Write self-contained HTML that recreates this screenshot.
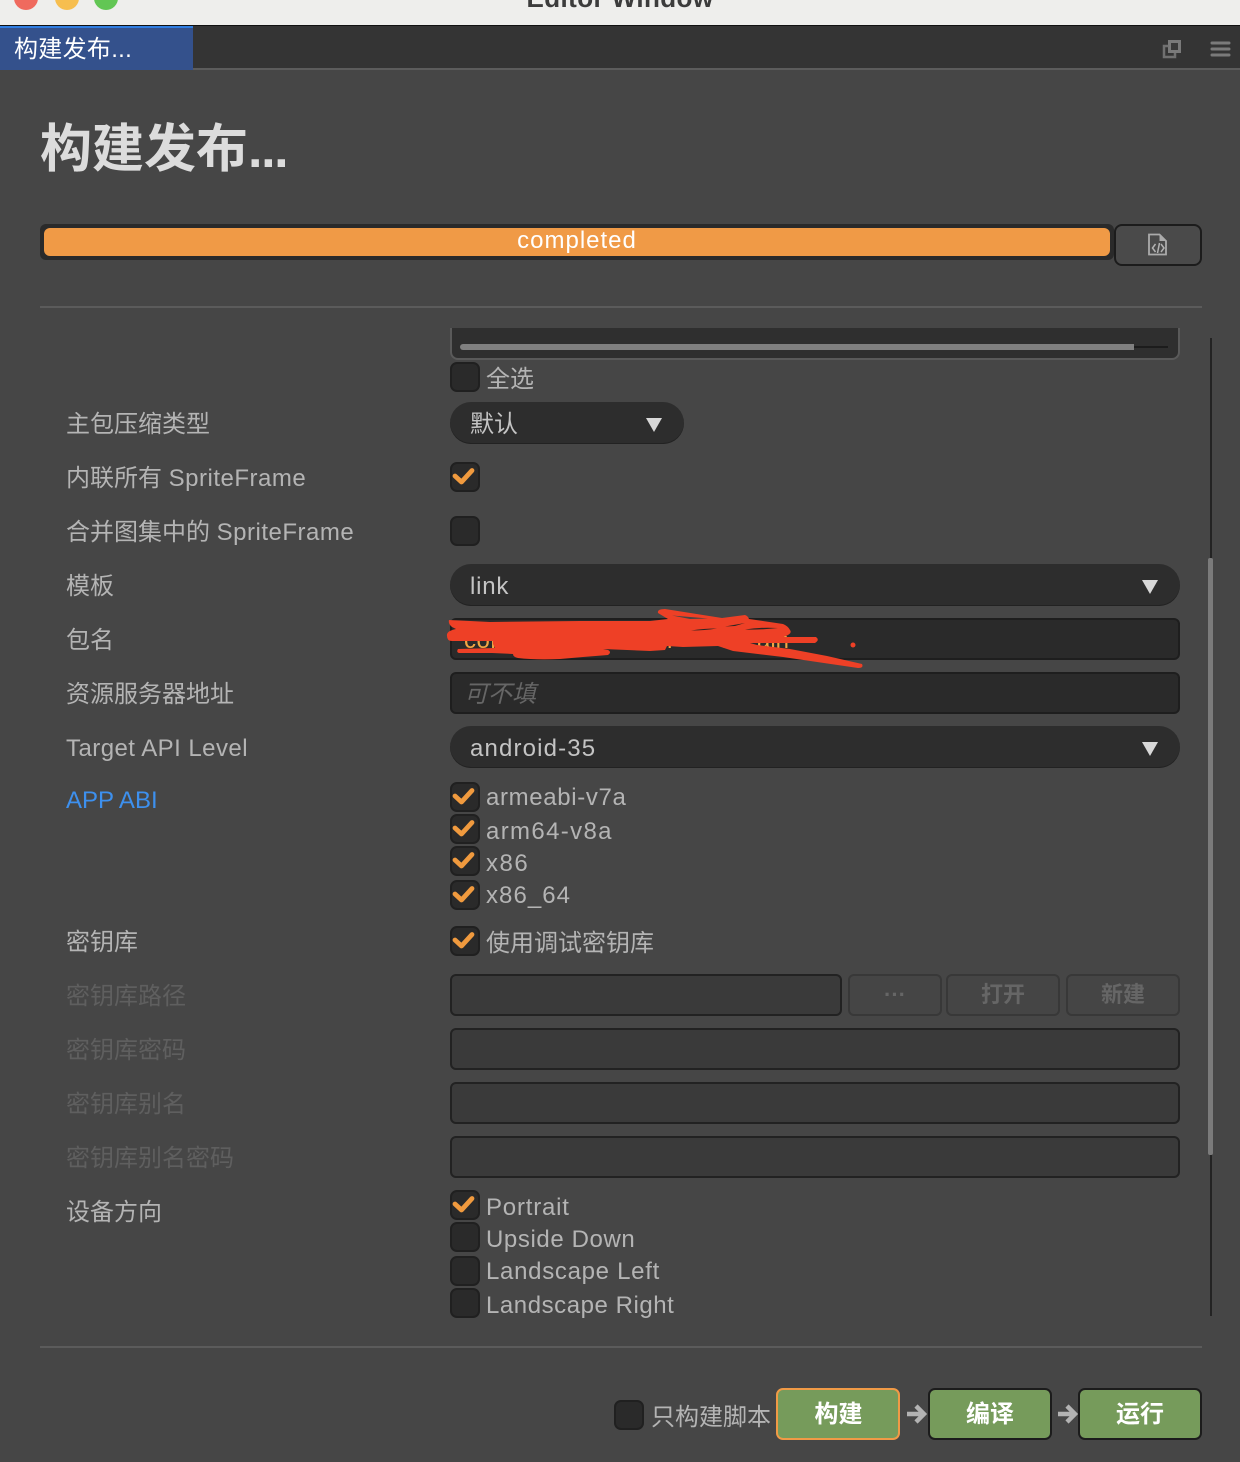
<!DOCTYPE html>
<html lang="zh">
<head>
<meta charset="utf-8">
<title>Editor Window</title>
<style>
html,body{margin:0;padding:0;background:#464646;}
body{position:relative;width:1240px;height:1462px;overflow:hidden;font-family:"Liberation Sans","Noto Sans CJK SC",sans-serif;font-size:24px;color:#b4b4b4;}
.a{position:absolute;box-sizing:border-box;}
.t{position:absolute;height:40px;line-height:40px;white-space:nowrap;}
.l{letter-spacing:.5px;}
.lab{left:66px;}
.dis{color:#5f5f5f;}
.opt{left:486px;}
.cb{position:absolute;left:450px;width:30px;height:30px;box-sizing:border-box;background:#2a2a2a;border:2px solid #202020;border-radius:7px;}
.cb svg{position:absolute;left:-2px;top:-2px;width:30px;height:30px;}
.sel{position:absolute;left:450px;width:730px;height:42px;background:#2d2d2d;border-radius:21px;box-shadow:inset 0 -1px 0 #222;}
.sel span{position:absolute;left:20px;top:3px;line-height:40px;color:#c4c4c4;}
.sel i{position:absolute;right:22px;top:16px;width:0;height:0;border-left:8px solid transparent;border-right:8px solid transparent;border-top:14px solid #d8d8d8;}
.inp{position:absolute;left:450px;width:730px;height:42px;box-sizing:border-box;border-radius:6px;border:2px solid #1e1e1e;}
.dark{background:#2a2a2a;}
.mid{background:#3a3a3a;border-color:#222;}
.dbtn{position:absolute;top:974px;height:42px;box-sizing:border-box;border:2px solid #383838;border-radius:6px;background:#454545;color:#666;font-weight:bold;font-size:22px;text-align:center;line-height:38px;}
.gbtn{position:absolute;top:1388px;height:52px;width:124px;box-sizing:border-box;border:2px solid #1c1c1c;border-radius:7px;background:#769b5b;color:#fff;font-weight:bold;text-align:center;line-height:49px;}
.hr{position:absolute;left:40px;width:1162px;height:2px;background:#5b5b5b;}
</style>
</head>
<body>
<!-- title bar -->
<div class="a" style="left:0;top:0;width:1240px;height:26px;background:#eeeeec;border-bottom:1px solid #111;overflow:hidden;">
  <div class="a" style="left:14px;top:-14px;width:24px;height:24px;border-radius:50%;background:#ef6a5e;"></div>
  <div class="a" style="left:55px;top:-14px;width:24px;height:24px;border-radius:50%;background:#f6be4f;"></div>
  <div class="a" style="left:94px;top:-14px;width:24px;height:24px;border-radius:50%;background:#62c654;"></div>
  <div class="a" style="left:0;top:-17px;width:1240px;text-align:center;font-weight:bold;font-size:26px;line-height:30px;color:#3c3c3c;letter-spacing:.4px;">Editor Window</div>
</div>
<!-- tab bar -->
<div class="a" style="left:0;top:26px;width:1240px;height:44px;background:#343434;border-bottom:2px solid #5c5c5c;"></div>
<div class="a" style="left:0;top:26px;width:193px;height:44px;background:#34518c;border-top:2px solid #2f7de1;"></div>
<div class="t" style="left:14px;top:30px;color:#fff;letter-spacing:.3px;">构建发布...</div>
<svg class="a" style="left:1160px;top:38px;" width="72" height="22" viewBox="0 0 72 22">
  <path d="M9.500 3.500h10v10h-10z" fill="#3a3a3a" stroke="#7a7a7a" stroke-width="3"/>
  <path d="M8.500 8h-4.500v11h11v-4" fill="none" stroke="#707070" stroke-width="2.500"/>
  <path d="M52 5h17M52 11h17M52 17h17" fill="none" stroke="#7a7a7a" stroke-width="3" stroke-linecap="round"/>
</svg>
<!-- heading -->
<div class="a" style="left:40px;top:115px;height:70px;line-height:70px;font-size:52px;font-weight:bold;color:#dcdcdc;white-space:nowrap;">构建发布<span style="letter-spacing:-1.400px;">...</span></div>
<!-- progress -->
<div class="a" style="left:40px;top:224px;width:1074px;height:36px;background:#2a2a2a;border-radius:6px;"></div>
<div class="a" style="left:44px;top:228px;width:1066px;height:28px;background:#f09a46;border-radius:6px;"></div>
<div class="t" style="left:40px;top:221px;width:1074px;text-align:center;color:#fff;letter-spacing:1px;">completed</div>
<div class="a" style="left:1114px;top:224px;width:88px;height:42px;background:#4a4a4a;border:2px solid #1c1c1c;border-radius:8px;"></div>
<svg class="a" style="left:1147px;top:233px;" width="22" height="24" viewBox="0 0 22 24">
  <path d="M2 1.500h10.500l6.500 6.500v13.500h-17z" fill="none" stroke="#ababab" stroke-width="1.800"/>
  <path d="M12.500 1.500v6.500h6.500z" fill="#ababab"/>
  <path d="M8.500 11l-3 4 3 4M14 11l3 4-3 4M12.500 10l-2 10" fill="none" stroke="#b3b3b3" stroke-width="1.500"/>
</svg>
<div class="hr" style="top:306px;"></div>
<!-- scrollbar -->
<div class="a" style="left:1210px;top:338px;width:2px;height:978px;background:#232323;"></div>
<div class="a" style="left:1208px;top:558px;width:5px;height:597px;background:#7b7b7b;border-radius:2px;"></div>
<!-- scroll box -->
<div class="a" style="left:450px;top:328px;width:730px;height:32px;background:#2f2f2f;border:2px solid #5a5a5a;border-top:0;border-radius:0 0 8px 8px;"></div>
<div class="a" style="left:460px;top:344px;width:674px;height:6px;background:#808080;border-radius:3px 0 0 3px;"></div>
<div class="a" style="left:1134px;top:346px;width:34px;height:2px;background:#1c1c1c;"></div>

<div class="cb" style="top:362px;"></div>
<div class="t opt" style="top:360px;">全选</div>

<div class="t lab" style="top:405px;">主包压缩类型</div>
<div class="sel" style="top:402px;width:234px;"><span>默认</span><i></i></div>

<div class="t lab" style="top:459px;">内联所有 <span class="l">SpriteFrame</span></div>
<div class="cb" style="top:462px;"><svg viewBox="0 0 30 30"><path d="M5 14l6.500 6L22 8.500" fill="none" stroke="#f09a3e" stroke-width="4.800" stroke-linecap="round" stroke-linejoin="round"/></svg></div>

<div class="t lab" style="top:513px;">合并图集中的 <span class="l">SpriteFrame</span></div>
<div class="cb" style="top:516px;"></div>

<div class="t lab" style="top:567px;">模板</div>
<div class="sel" style="top:564px;"><span style="letter-spacing:.8px;">link</span><i></i></div>

<div class="t lab" style="top:621px;">包名</div>
<div class="inp dark" style="top:618px;"></div>
<div class="t" style="left:464px;top:621px;color:#f2a643;letter-spacing:.5px;">com</div>
<div class="t" style="left:667px;top:621px;color:#f2a643;">r</div>
<div class="t" style="left:722px;top:621px;color:#f2a643;letter-spacing:2px;">is</div>
<div class="t" style="left:757px;top:621px;color:#f2a643;">ain</div>
<svg class="a" style="left:440px;top:600px;" width="440" height="80" viewBox="440 600 440 80">
  <path d="M449 620 Q448 624 452 627 L456 629 Q446 631 447 636 Q447 641 452 641 L493 641 L493 644 L495 648 L458 649 Q456 652 459 653 L492 653 L513 654 Q513 657 518 658 Q535 660 560 659 L583 657 L608 655 Q612 652 608 650 L603 649 L650 651 L665 650 L667 646 L683 647 L718 646 L733 651 L783 657 L858 668 Q864 668 862 664 L827 656 L790 649 L757 645 L750 643 L815 643 Q820 640 816 637 L783 637 Q793 634 790 630 Q788 626 783 624 L749 619 Q748 616 745 615 L722 618 L665 609 Q657 609 658 613 L668 619 L650 621 L580 621 L490 622 L470 621Z" fill="#ee4026"/>
  <path d="M672 615.500 L708 618.500 L690 619Z" fill="#464646"/>
  <path d="M691 630.500 Q703 628.500 717 628.500 Q705 630.500 691 630.500ZM725 626.500 L745 623 L735 626ZM745 629.500 Q760 627 778 628 Q760 630 745 629.500Z" fill="#2c2522"/>
  <circle cx="853" cy="645" r="2.500" fill="#ee4026"/>
</svg>

<div class="t lab" style="top:675px;">资源服务器地址</div>
<div class="inp dark" style="top:672px;"></div>
<div class="t" style="left:464px;top:675px;color:#666;font-style:italic;">可不填</div>

<div class="t lab" style="top:729px;letter-spacing:.45px;">Target API Level</div>
<div class="sel" style="top:726px;"><span style="letter-spacing:1.15px;">android-35</span><i></i></div>

<div class="t lab" style="top:781px;color:#3d90ee;">APP ABI</div>
<div class="cb" style="top:782px;"><svg viewBox="0 0 30 30"><path d="M5 14l6.500 6L22 8.500" fill="none" stroke="#f09a3e" stroke-width="4.800" stroke-linecap="round" stroke-linejoin="round"/></svg></div>
<div class="t opt" style="top:778px;letter-spacing:.65px;">armeabi-v7a</div>
<div class="cb" style="top:814px;"><svg viewBox="0 0 30 30"><path d="M5 14l6.500 6L22 8.500" fill="none" stroke="#f09a3e" stroke-width="4.800" stroke-linecap="round" stroke-linejoin="round"/></svg></div>
<div class="t opt" style="top:812px;letter-spacing:1.35px;">arm64-v8a</div>
<div class="cb" style="top:846px;"><svg viewBox="0 0 30 30"><path d="M5 14l6.500 6L22 8.500" fill="none" stroke="#f09a3e" stroke-width="4.800" stroke-linecap="round" stroke-linejoin="round"/></svg></div>
<div class="t opt" style="top:844px;letter-spacing:1.5px;">x86</div>
<div class="cb" style="top:880px;"><svg viewBox="0 0 30 30"><path d="M5 14l6.500 6L22 8.500" fill="none" stroke="#f09a3e" stroke-width="4.800" stroke-linecap="round" stroke-linejoin="round"/></svg></div>
<div class="t opt" style="top:876px;letter-spacing:1.05px;">x86_64</div>

<div class="t lab" style="top:923px;">密钥库</div>
<div class="cb" style="top:926px;"><svg viewBox="0 0 30 30"><path d="M5 14l6.500 6L22 8.500" fill="none" stroke="#f09a3e" stroke-width="4.800" stroke-linecap="round" stroke-linejoin="round"/></svg></div>
<div class="t opt" style="top:924px;">使用调试密钥库</div>

<div class="t lab dis" style="top:977px;">密钥库路径</div>
<div class="inp mid" style="top:974px;width:392px;"></div>
<div class="dbtn" style="left:848px;width:94px;">···</div>
<div class="dbtn" style="left:946px;width:114px;">打开</div>
<div class="dbtn" style="left:1066px;width:114px;">新建</div>

<div class="t lab dis" style="top:1031px;">密钥库密码</div>
<div class="inp mid" style="top:1028px;"></div>
<div class="t lab dis" style="top:1085px;">密钥库别名</div>
<div class="inp mid" style="top:1082px;"></div>
<div class="t lab dis" style="top:1139px;">密钥库别名密码</div>
<div class="inp mid" style="top:1136px;"></div>

<div class="t lab" style="top:1193px;">设备方向</div>
<div class="cb" style="top:1190px;"><svg viewBox="0 0 30 30"><path d="M5 14l6.500 6L22 8.500" fill="none" stroke="#f09a3e" stroke-width="4.800" stroke-linecap="round" stroke-linejoin="round"/></svg></div>
<div class="t opt" style="top:1188px;letter-spacing:.8px;">Portrait</div>
<div class="cb" style="top:1222px;"></div>
<div class="t opt" style="top:1220px;letter-spacing:.6px;">Upside Down</div>
<div class="cb" style="top:1256px;"></div>
<div class="t opt" style="top:1252px;letter-spacing:.7px;">Landscape Left</div>
<div class="cb" style="top:1288px;"></div>
<div class="t opt" style="top:1286px;letter-spacing:.55px;">Landscape Right</div>

<div class="hr" style="top:1346px;"></div>

<div class="cb" style="left:614px;top:1400px;"></div>
<div class="t" style="left:651px;top:1398px;">只构建脚本</div>
<div class="gbtn" style="left:776px;border-color:#f09a46;text-indent:1px;">构建</div>
<svg class="a" style="left:905px;top:1402px;" width="22" height="24" viewBox="0 0 22 24"><path d="M2 12h16M11 4l8 8-8 8" fill="none" stroke="#b3b3b3" stroke-width="4.500"/></svg>
<div class="gbtn" style="left:928px;">编译</div>
<svg class="a" style="left:1056px;top:1402px;" width="22" height="24" viewBox="0 0 22 24"><path d="M2 12h16M11 4l8 8-8 8" fill="none" stroke="#b3b3b3" stroke-width="4.500"/></svg>
<div class="gbtn" style="left:1078px;">运行</div>
</body>
</html>
